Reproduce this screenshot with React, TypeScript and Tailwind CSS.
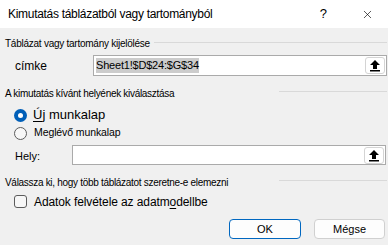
import { X } from "lucide-react";

const UploadIcon = () => (
  <svg width="12" height="13" viewBox="0 0 12 13" fill="none">
    <path d="M6 1 L11 6 H8 V10 H4 V6 H1 Z" fill="#000" />
    <rect x="1" y="11" width="10" height="1.5" fill="#000" />
  </svg>
);

const PickButton = () => (
  <div className="ml-auto mr-[1px] flex h-[17px] w-[20px] items-center justify-center rounded-[3px] border border-[#d4d4d4] bg-white">
    <UploadIcon />
  </div>
);

const SectionHeading = ({ text, top }: { text: string; top: string }) => (
  <div className={`flex h-[14px] items-center pl-[5px] pr-[1px] ${top}`}>
    <span className="whitespace-nowrap text-[10px] tracking-[-0.3px] text-black">{text}</span>
    <div className="ml-auto h-px w-[108px] -translate-y-[2px] bg-[#d9d9d9]" />
  </div>
);

const App = () => {
  return (
    <div
      className="flex h-[245px] w-[388px] flex-col overflow-hidden bg-[#f0f0f0] text-black"
      style={{ fontFamily: '"Liberation Sans", Arial, sans-serif' }}
    >
      {/* title bar */}
      <div className="flex h-[28px] shrink-0 items-center bg-white pl-[8px]">
        <span className="text-[12px] tracking-[-0.3px]">Kimutatás táblázatból vagy tartományból</span>
        <span className="ml-auto text-[13px]">?</span>
        <X className="ml-[34px] mr-[14px] h-[13px] w-[13px]" strokeWidth={1.2} />
      </div>

      {/* source range */}
      <div className="mt-[8px] flex h-[14px] items-center pl-[5px] pr-[1px]">
        <span className="whitespace-nowrap text-[10px] tracking-[-0.25px]">Táblázat vagy tartomány kijelölése</span>
        <div className="ml-[4px] h-px flex-1 -translate-y-[1px] bg-[#d9d9d9]" />
      </div>
      <div className="mt-[5px] flex h-[21px] items-center pl-[15px] pr-[1px]">
        <span className="w-[78px] text-[12px]">címke</span>
        <div className="flex h-[21px] flex-1 items-center border border-[#aaaaaa] bg-white pl-[2px]">
          <span className="bg-[#cccccc] text-[11px] leading-[15px] tracking-[-0.2px]">Sheet1!$D$24:$G$34</span>
          <PickButton />
        </div>
      </div>

      {/* destination */}
      <SectionHeading text="A kimutatás kívánt helyének kiválasztása" top="mt-[10px]" />
      <div className="mt-[7px] flex h-[16px] items-center pl-[14px]">
        <div className="flex h-[13px] w-[13px] items-center justify-center rounded-full bg-[#005fb8]">
          <div className="h-[5px] w-[5px] rounded-full bg-white" />
        </div>
        <span className="ml-[6px] text-[13px]">
          <span className="underline decoration-1 underline-offset-2">Ú</span>j munkalap
        </span>
      </div>
      <div className="mt-[2px] flex h-[16px] items-center pl-[14px]">
        <div className="h-[13px] w-[13px] rounded-full border border-[#5c5c5c] bg-[#f7f7f7]" />
        <span className="ml-[7px] text-[10.5px] tracking-[-0.1px]">Meglévő munkalap</span>
      </div>
      <div className="mt-[4px] flex h-[20px] items-center pl-[15px] pr-[2px]">
        <span className="w-[57px] pt-[3px] text-[11px]">Hely:</span>
        <div className="flex h-[20px] flex-1 items-center border border-[#aaaaaa] bg-white">
          <PickButton />
        </div>
      </div>

      {/* data model */}
      <SectionHeading text="Válassza ki, hogy több táblázatot szeretne-e elemezni" top="mt-[10px]" />
      <div className="mt-[5px] flex h-[15px] items-center pl-[14px]">
        <div className="h-[13px] w-[13px] rounded-[3px] border border-[#5c5c5c] bg-[#f7f7f7]" />
        <span className="ml-[7px] text-[12px] tracking-[-0.1px]">
          Adatok felvétele az adatm<span className="underline decoration-1 underline-offset-2">o</span>dellbe
        </span>
      </div>

      {/* buttons */}
      <div className="mt-[10px] flex h-[20px] justify-end gap-[13px] pr-[3px]">
        <button className="h-[20px] w-[72px] rounded-[4px] border border-[#0067c0] bg-[#fdfdfd] text-[11px]">
          OK
        </button>
        <button className="h-[20px] w-[71px] rounded-[4px] border border-[#d0d0d0] bg-[#fdfdfd] text-[11px]">
          Mégse
        </button>
      </div>
    </div>
  );
};

export default App;
